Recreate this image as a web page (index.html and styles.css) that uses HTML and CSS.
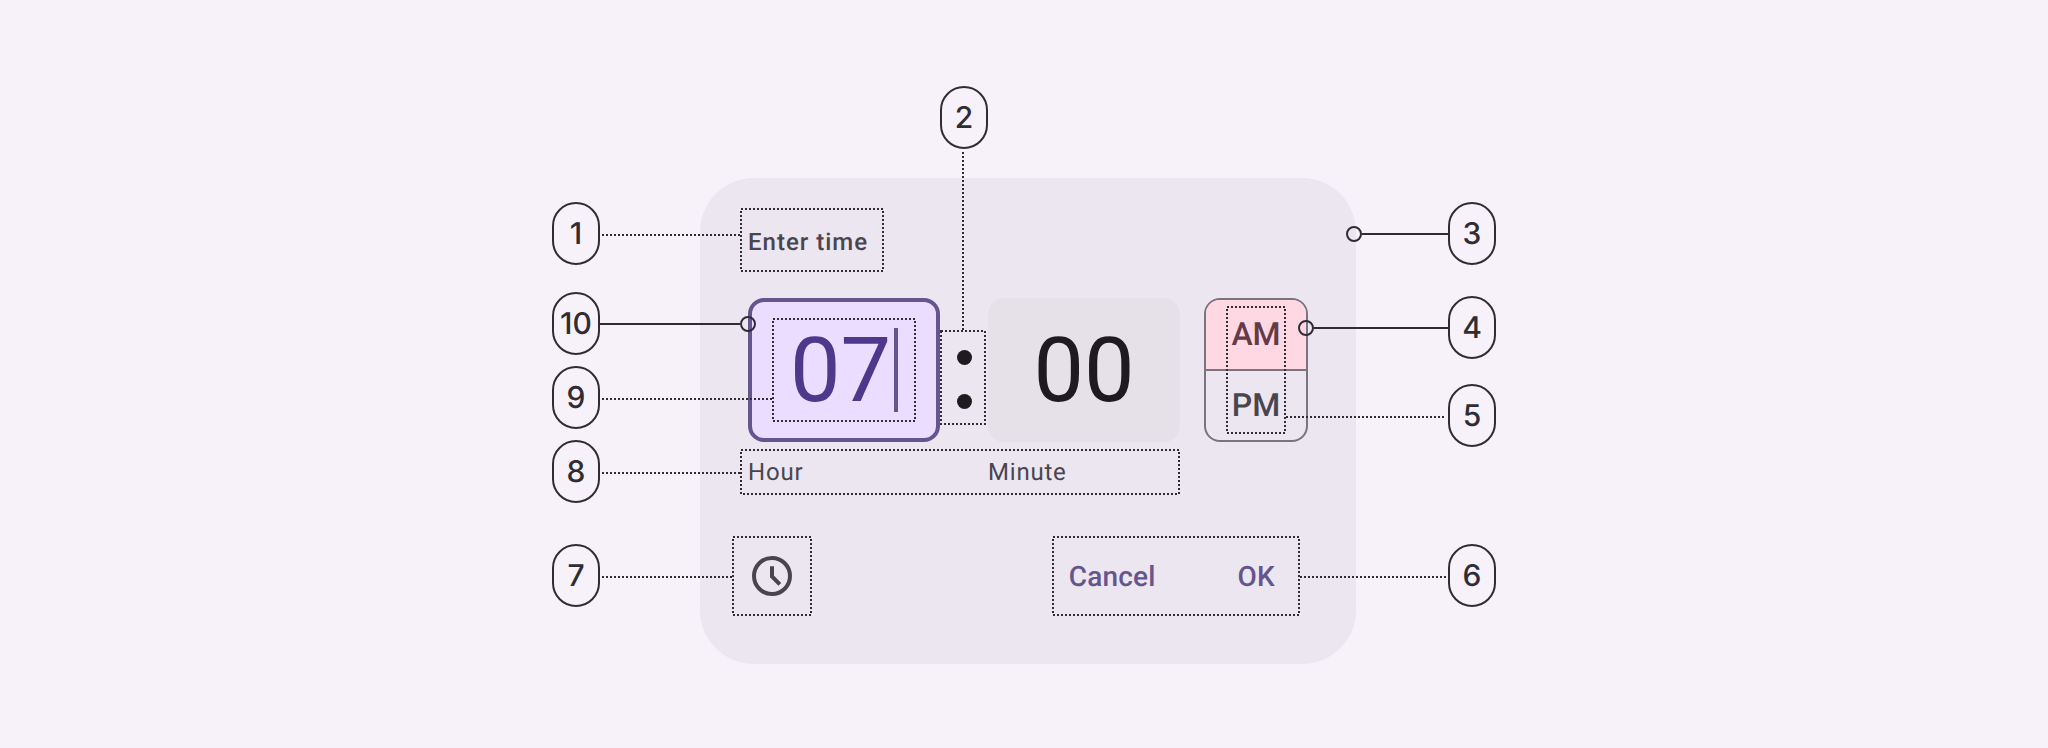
FILE: index.html
```html
<!DOCTYPE html>
<html lang="en">
<head>
    <meta charset="UTF-8">
    <meta name="viewport" content="width=device-width, initial-scale=1.0">
    <title>Time input anatomy</title>
    <link rel="stylesheet" href="styles.css">
</head>
<body>
    <div class="stage">
        <div class="dialog">
            <div class="dialog-title">Enter time</div>
            <div class="time-grid">
                <div class="field field-active">
                    <span>07</span>
                    <span class="caret"></span>
                </div>
                <div class="colon">
                    <span class="dot"></span>
                    <span class="dot"></span>
                </div>
                <div class="field">00</div>
                <div class="period">
                    <div class="period-item period-selected">AM</div>
                    <div class="period-item">PM</div>
                </div>
                <div class="label label-hour">Hour</div>
                <div class="label label-minute">Minute</div>
            </div>
            <div class="actions">
                <svg class="clock" width="48" height="48" viewBox="0 0 48 48" fill="none">
                    <circle cx="24" cy="24" r="18" stroke="#49454f" stroke-width="4"/>
                    <path d="M24 14.3v10.2l7.8 7.8" stroke="#49454f" stroke-width="4"/>
                </svg>
                <div class="buttons">
                    <span class="text-button">Cancel</span>
                    <span class="text-button">OK</span>
                </div>
            </div>
        </div>

        <!-- callouts drawn over the dialog -->
        <svg class="callouts" width="2048" height="748" fill="none">
            <g class="dotted">
                <rect x="741" y="209" width="142" height="62"/>
                <rect x="773" y="319" width="142" height="102"/>
                <rect x="941" y="331" width="44" height="93"/>
                <rect x="741" y="450" width="438" height="44"/>
                <rect x="733" y="537" width="78" height="78"/>
                <rect x="1053" y="537" width="246" height="78"/>
                <rect x="1227" y="307" width="58" height="126"/>
                <path d="M602 235H740M602 399H772M602 473H740M602 577H732M1286 417H1446M1300 577H1446M963 152V330"/>
            </g>
            <g class="solid">
                <path d="M600 324H740M1362 234H1448M1314 328H1448"/>
                <circle cx="748" cy="324" r="7"/>
                <circle cx="1354" cy="234" r="7"/>
                <circle cx="1306" cy="328" r="7"/>
            </g>
        </svg>

        <div class="badge badge-1">1</div>
        <div class="badge badge-2">2</div>
        <div class="badge badge-3">3</div>
        <div class="badge badge-4">4</div>
        <div class="badge badge-5">5</div>
        <div class="badge badge-6">6</div>
        <div class="badge badge-7">7</div>
        <div class="badge badge-8">8</div>
        <div class="badge badge-9">9</div>
        <div class="badge badge-10">10</div>
    </div>
</body>
</html>
```

FILE: styles.css
```css
html, body {
    margin: 0;
    background: #f7f2fa;
}
.stage {
    position: relative;
    width: 2048px;
    height: 748px;
    box-sizing: border-box;
    padding: 178px 0 0 700px;
    font-family: Roboto, "Liberation Sans", sans-serif;
    text-rendering: geometricPrecision;
    overflow: hidden;
}
.dialog {
    width: 656px;
    height: 486px;
    box-sizing: border-box;
    padding: 32px 48px 48px;
    background: #ece6f0;
    border-radius: 54px;
}
.dialog-title {
    height: 64px;
    line-height: 64px;
    font-size: 24px;
    font-weight: 500;
    letter-spacing: 1px;
    color: #49454f;
}
.time-grid {
    display: grid;
    grid-template-columns: 192px 48px 192px 104px;
    grid-template-rows: 144px 32px;
    row-gap: 14px;
    margin-top: 24px;
}
.field {
    display: flex;
    align-items: center;
    justify-content: center;
    background: #e6e0e9;
    border-radius: 16px;
    font-size: 90px;
    color: #1d1b20;
}
.field-active {
    box-sizing: border-box;
    background: #eaddff;
    border: 4px solid #65558f;
    color: #4f378b;
}
.caret {
    width: 4px;
    height: 84px;
    margin-left: 3px;
    background: #65558f;
}
.colon {
    display: flex;
    flex-direction: column;
    align-items: center;
    justify-content: center;
    gap: 29px;
    padding: 18px 0 0;
}
.dot {
    width: 15px;
    height: 15px;
    border-radius: 50%;
    background: #1d1b20;
}
.period {
    display: flex;
    flex-direction: column;
    box-sizing: border-box;
    margin-left: 24px;
    width: 104px;
    border: 2px solid #79747e;
    border-radius: 16px;
    overflow: hidden;
}
.period-item {
    flex: 1;
    display: flex;
    align-items: center;
    justify-content: center;
    padding-bottom: 2px;
    font-size: 32px;
    font-weight: 500;
    color: #49454f;
}
.period-item + .period-item {
    border-top: 2px solid #79747e;
}
.period-selected {
    background: #ffd8e4;
    color: #633b48;
}
.label {
    line-height: 32px;
    font-size: 24px;
    letter-spacing: 0.8px;
    color: #49454f;
}
.label-hour {
    grid-column: 1;
}
.label-minute {
    grid-column: 3;
}
.actions {
    display: flex;
    align-items: center;
    justify-content: space-between;
    height: 80px;
    margin-top: 48px;
}
.clock {
    display: block;
}
.buttons {
    display: flex;
    gap: 82px;
    margin-right: 33px;
}
.text-button {
    font-size: 28px;
    font-weight: 500;
    letter-spacing: 0.2px;
    color: #65558f;
}

.callouts {
    position: absolute;
    left: 0;
    top: 0;
}
.dotted {
    stroke: #2f2d33;
    stroke-width: 2;
    stroke-dasharray: 2 2;
}
.solid {
    stroke: #2f2d33;
    stroke-width: 2;
}
.badge {
    position: absolute;
    width: 48px;
    height: 63px;
    box-sizing: border-box;
    display: flex;
    align-items: center;
    justify-content: center;
    background: #f7f2fa;
    border: 2px solid #2f2d33;
    border-radius: 24px;
    font-family: Inter, Roboto, sans-serif;
    font-size: 30px;
    font-weight: 500;
    color: #2f2d33;
}
.badge-1 { left: 552px; top: 202px; }
.badge-2 { left: 940px; top: 86px; }
.badge-3 { left: 1448px; top: 202px; }
.badge-4 { left: 1448px; top: 296px; }
.badge-5 { left: 1448px; top: 384px; }
.badge-6 { left: 1448px; top: 544px; }
.badge-7 { left: 552px; top: 544px; }
.badge-8 { left: 552px; top: 440px; }
.badge-9 { left: 552px; top: 366px; }
.badge-10 { left: 552px; top: 292px; }
```
